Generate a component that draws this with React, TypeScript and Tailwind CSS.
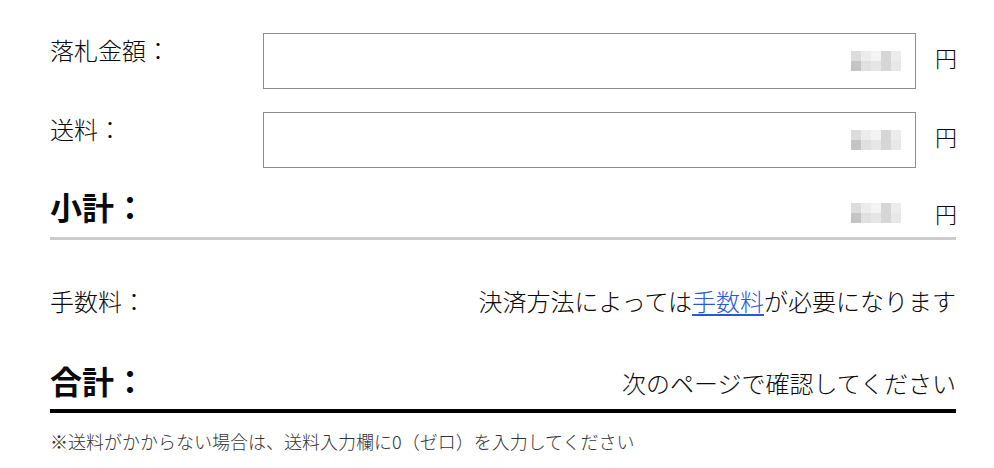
const cells = [
  "bg-[#dcdcdc]",
  "bg-[#ececec]",
  "bg-[#f3f3f3]",
  "bg-[#d6d6d6]",
  "bg-[#ececec]",
  "bg-[#c4c4c4]",
  "bg-[#e0e0e0]",
  "bg-[#e6e6e6]",
  "bg-[#d6d6d6]",
  "bg-[#e8e8e8]",
];

// masked amount (mosaic block)
const Masked = () => (
  <div className="grid grid-cols-5 w-[50px] h-[20px]">
    {cells.map((c, i) => (
      <div key={i} className={c} />
    ))}
  </div>
);

const Yen = () => <span className="text-[22px] leading-none w-[21px]">円</span>;

interface FieldRowProps {
  label: string;
  className?: string;
}

const FieldRow = ({ label, className }: FieldRowProps) => (
  <div className={`flex items-start ${className ?? ""}`}>
    <div className="w-[213px] pt-[2px] text-[24px] leading-[30px]">{label}</div>
    <div className="flex-1 h-[56px] border border-[#8c8c8c] flex items-center justify-end pr-[14px]">
      <Masked />
    </div>
    <div className="w-[40px] h-[56px] flex items-center justify-end pb-[8px]">
      <Yen />
    </div>
  </div>
);

const App = () => {
  return (
    <div className="min-h-screen bg-white text-[#0a0a0a] font-light font-['Noto_Sans_CJK_JP',sans-serif]">
      <div className="w-[956px] pl-[50px] pt-[33px]">
        <FieldRow label="落札金額：" />
        <FieldRow label="送料：" className="mt-[23px]" />

        <div className="flex items-end justify-between mt-[22px] h-[36px]">
          <h2 className="text-[32px] font-bold leading-[36px] mb-[2px]">小計：</h2>
          <div className="flex items-center gap-[34px] pb-[2px]">
            <Masked />
            <Yen />
          </div>
        </div>
        <div className="h-[3px] bg-[#cccccc] mt-[11px]" />

        <div className="flex items-center justify-between mt-[46px] text-[24px] leading-[30px]">
          <span>手数料：</span>
          <span>
            決済方法によっては
            <a href="#" className="text-[#2659d6] underline decoration-[2px] underline-offset-[3px]">
              手数料
            </a>
            が必要になります
          </span>
        </div>

        <div className="flex items-end justify-between mt-[46px]">
          <h2 className="text-[32px] font-bold leading-[36px] mb-[1px]">合計：</h2>
          <span className="text-[24px] leading-[30px] pb-[1px]">次のページで確認してください</span>
        </div>
        <div className="h-[4px] bg-black mt-[10px]" />

        <p className="mt-[16px] text-[18px] leading-[24px] text-[#333]">
          ※送料がかからない場合は、送料入力欄に0（ゼロ）を入力してください
        </p>
      </div>
    </div>
  );
};

export default App;
